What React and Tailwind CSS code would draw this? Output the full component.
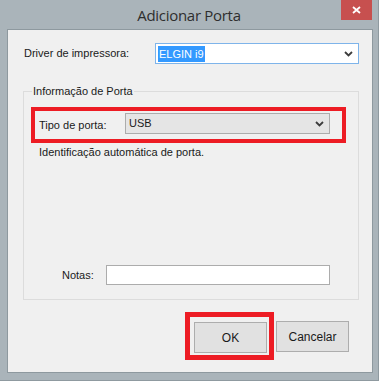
import { useState } from 'react'

const ui = { fontFamily: '"Liberation Sans", Arial, sans-serif' }

function Chevron() {
  return (
    <svg width="9" height="6" viewBox="0 0 9 6" className="shrink-0">
      <polyline points="1,1 4.5,4.5 8,1" fill="none" stroke="#3c3c3c" strokeWidth="1.8" />
    </svg>
  )
}

export default function App() {
  const [notes, setNotes] = useState('')

  return (
    <div className="w-[379px] h-[381px] bg-[#aab4ba] border-r border-b border-[#8f9aa0] flex flex-col text-[11px] text-[#1a1a1a]" style={ui}>
      {/* title bar */}
      <div className="h-[29px] flex shrink-0">
        <div className="w-[37px]" />
        <div className="flex-1 flex items-center justify-center text-[15px] text-[#2e2e2e] tracking-[-0.3px] pt-[1px]" style={{ fontFamily: '"Open Sans", "Noto Sans", sans-serif' }}>
          Adicionar Porta
        </div>
        <div className="w-[37px] flex items-start">
          <button className="w-[31px] h-[20px] bg-[#c7504f] flex items-center justify-center">
            <svg width="9" height="8" viewBox="0 0 9 8">
              <path d="M1 1 L8 7 M8 1 L1 7" stroke="#fff" strokeWidth="1.8" />
            </svg>
          </button>
        </div>
      </div>

      {/* client area */}
      <div className="ml-[7px] w-[366px] h-[344px] bg-[#f0f0f0] border border-[#8e999f] flex flex-col shrink-0">
        <div className="mt-[13px] h-[21px] flex items-center">
          <span className="pl-[16px] w-[147px]">Driver de impressora:</span>
          <div className="w-[204px] h-[21px] bg-white border border-[#7eb4ea] flex items-center pl-[2px] pr-[5px]">
            <span className="bg-[#3399ff] text-white px-[1px] leading-[16px]">ELGIN i9</span>
            <div className="flex-1" />
            <Chevron />
          </div>
        </div>

        {/* group box */}
        <div className="mt-[27px] ml-[15px] w-[336px] h-[209px] border border-[#dcdcdc] flex flex-col">
          <div className="-mt-[8px] ml-[8px] w-fit px-[1px] bg-[#f0f0f0] leading-[14px]">Informação de Porta</div>

          <div className="mt-[9px] ml-[7px] w-[315px] h-[36px] border-4 border-[#ed1c24] flex items-start">
            <span className="pl-[4px] w-[90px] mt-[6px]">Tipo de porta:</span>
            <div className="mt-[2px] w-[205px] h-[21px] bg-[#e5e5e5] border border-[#acacac] flex items-center pl-[3px] pr-[5px]">
              <span>USB</span>
              <div className="flex-1" />
              <Chevron />
            </div>
          </div>

          <div className="mt-[2px] ml-[15px] leading-[14px]">Identificação automática de porta.</div>

          <div className="mt-auto mb-[14px] flex items-center">
            <span className="ml-[38px] w-[44px]">Notas:</span>
            <input
              value={notes}
              onChange={e => setNotes(e.target.value)}
              className="w-[224px] h-[20px] bg-white border border-[#acacac] outline-none px-[2px] text-[11px]"
            />
          </div>
        </div>

        {/* buttons */}
        <div className="mt-[12px] ml-[177px] flex items-start">
          <div className="w-[89px] h-[48px] border-[5px] border-[#ed1c24]">
            <button className="ml-[4px] mt-[5px] w-[73px] h-[31px] bg-[#e1e1e1] border border-[#adadad] text-[12px]">OK</button>
          </div>
          <button className="ml-[2px] mt-[9px] w-[73px] h-[31px] bg-[#e1e1e1] border border-[#adadad] text-[12px]">Cancelar</button>
        </div>
      </div>
    </div>
  )
}
